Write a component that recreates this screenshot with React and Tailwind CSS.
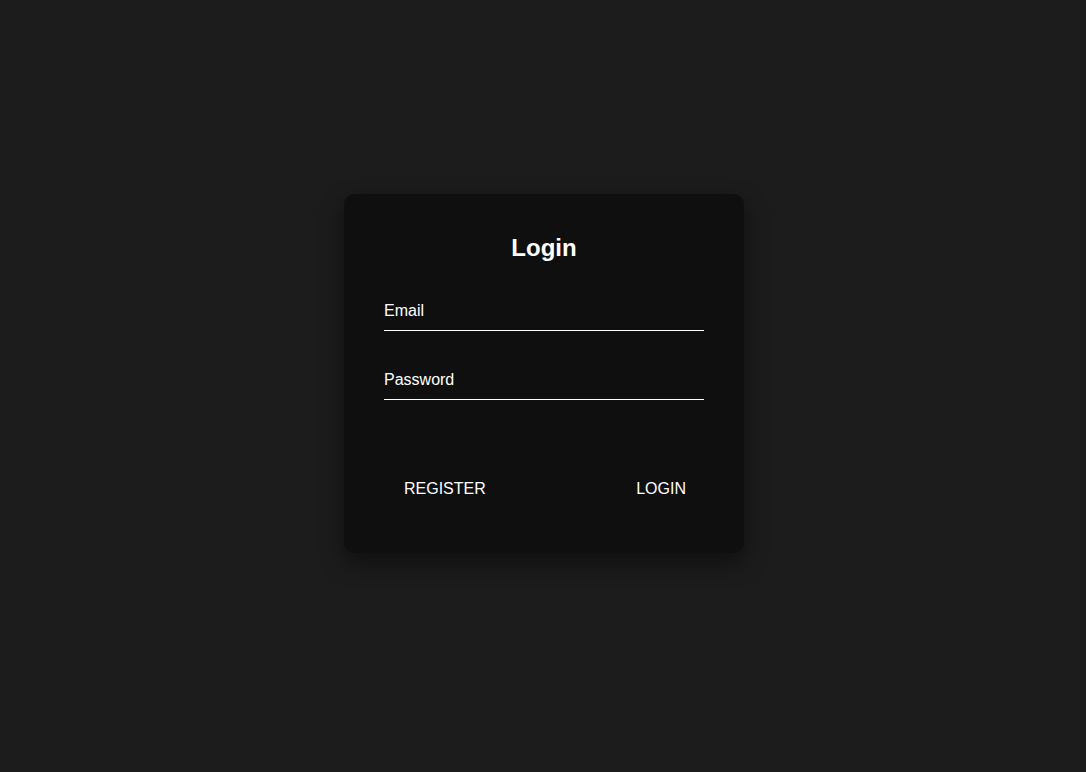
export default function App() {
  return (
    <div className="flex min-h-screen justify-center bg-[#1c1c1c] pt-[194px] pl-[2px] font-['Liberation_Sans',Arial,sans-serif] text-white">
      <div className="h-fit w-[400px] rounded-[10px] bg-[#0f0f0f] px-10 pt-[38px] pb-[42px] shadow-[0_10px_25px_rgba(0,0,0,0.45)]">
        <h1 className="text-center text-2xl leading-8 font-bold">Login</h1>

        <form className="mt-[37px] flex flex-col gap-[39px]" onSubmit={(e) => e.preventDefault()}>
          <input
            type="email"
            placeholder="Email"
            className="h-[30px] w-full border-b border-white bg-transparent pb-[9px] text-base leading-5 text-white outline-none placeholder:text-white"
          />
          <input
            type="password"
            placeholder="Password"
            className="h-[30px] w-full border-b border-white bg-transparent pb-[9px] text-base leading-5 text-white outline-none placeholder:text-white"
          />
        </form>

        <div className="mt-[67px] flex items-center justify-between">
          <button className="px-5 py-3 text-base leading-5 uppercase text-white">Register</button>
          <button className="px-[18px] py-3 text-base leading-5 uppercase text-white">Login</button>
        </div>
      </div>
    </div>
  );
}
